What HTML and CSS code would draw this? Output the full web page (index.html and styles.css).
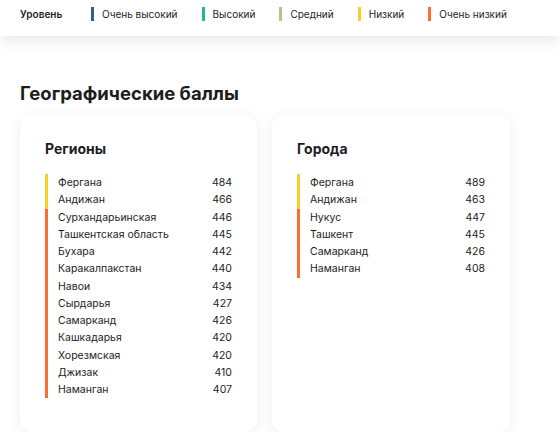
FILE: index.html
```html
<!DOCTYPE html>
<html lang="ru">
<head>
<meta charset="utf-8">
<link rel="stylesheet" href="styles.css">
</head>
<body>
<header class="legend">
  <span class="legend-title">Уровень</span>
  <span class="legend-item"><i class="mark c-vhigh"></i>Очень высокий</span>
  <span class="legend-item"><i class="mark c-high"></i>Высокий</span>
  <span class="legend-item"><i class="mark c-mid"></i>Средний</span>
  <span class="legend-item"><i class="mark c-low"></i>Низкий</span>
  <span class="legend-item"><i class="mark c-vlow"></i>Очень низкий</span>
</header>
<main class="content">
  <h1 class="page-title">Географические баллы</h1>
  <div class="cards">
    <section class="card">
      <h2 class="card-title">Регионы</h2>
      <div class="group low">
        <div class="row"><span>Фергана</span><span>484</span></div>
        <div class="row"><span>Андижан</span><span>466</span></div>
      </div>
      <div class="group vlow">
        <div class="row"><span>Сурхандарьинская</span><span>446</span></div>
        <div class="row"><span>Ташкентская область</span><span>445</span></div>
        <div class="row"><span>Бухара</span><span>442</span></div>
        <div class="row"><span>Каракалпакстан</span><span>440</span></div>
        <div class="row"><span>Навои</span><span>434</span></div>
        <div class="row"><span>Сырдарья</span><span>427</span></div>
        <div class="row"><span>Самарканд</span><span>426</span></div>
        <div class="row"><span>Кашкадарья</span><span>420</span></div>
        <div class="row"><span>Хорезмская</span><span>420</span></div>
        <div class="row"><span>Джизак</span><span>410</span></div>
        <div class="row"><span>Наманган</span><span>407</span></div>
      </div>
    </section>
    <section class="card">
      <h2 class="card-title">Города</h2>
      <div class="group low">
        <div class="row"><span>Фергана</span><span>489</span></div>
        <div class="row"><span>Андижан</span><span>463</span></div>
      </div>
      <div class="group vlow">
        <div class="row"><span>Нукус</span><span>447</span></div>
        <div class="row"><span>Ташкент</span><span>445</span></div>
        <div class="row"><span>Самарканд</span><span>426</span></div>
        <div class="row"><span>Наманган</span><span>408</span></div>
      </div>
    </section>
  </div>
</main>
</body>
</html>
```
FILE: styles.css
```css
* { box-sizing: border-box; }
html, body {
  margin: 0;
  background: #fff;
  font-family: "Inter", "Noto Sans", sans-serif;
  color: #1d1d1f;
}
.legend {
  height: 36px;
  background: #fff;
  display: flex;
  align-items: center;
  padding: 0 20px 8px;
  font-size: 10px;
  white-space: nowrap;
  box-shadow: 0 5px 14px rgba(0,0,0,0.09);
  position: relative;
  z-index: 1;
}
.legend-title {
  font-weight: 600;
  width: 71px;
  flex-shrink: 0;
}
.legend-item {
  display: flex;
  align-items: center;
  flex-shrink: 0;
  margin-right: 24px;
}
.mark {
  display: inline-block;
  width: 3px;
  height: 14px;
  margin-right: 8px;
}
.c-vhigh { background: #2e6189; }
.c-high { background: #26b597; }
.c-mid { background: #a8c98a; }
.c-low { background: #f6cf2a; }
.c-vlow { background: #ff6b35; }
.content {
  padding: 45px 20px 0;
}
.page-title {
  margin: 0 0 10px;
  font-size: 18.5px;
  font-weight: 700;
  line-height: 24px;
}
.cards {
  display: grid;
  grid-template-columns: 237px 238px;
  gap: 15px;
}
.card {
  background: #fff;
  border-radius: 12px;
  box-shadow: 0 2px 14px rgba(0,0,0,0.07);
  padding: 24px 25px 34px;
  min-height: 317px;
}
.card-title {
  margin: 0 0 15px;
  font-size: 14px;
  font-weight: 700;
  line-height: 20px;
}
.group {
  border-left: 3px solid;
  padding: 0 0 0 10px;
  font-size: 10.5px;
}
.group.low { border-color: #f6cf2a; }
.group.vlow { border-color: #ff6b35; }
.row {
  display: flex;
  justify-content: space-between;
  height: 17.25px;
  line-height: 17.25px;
}
```
